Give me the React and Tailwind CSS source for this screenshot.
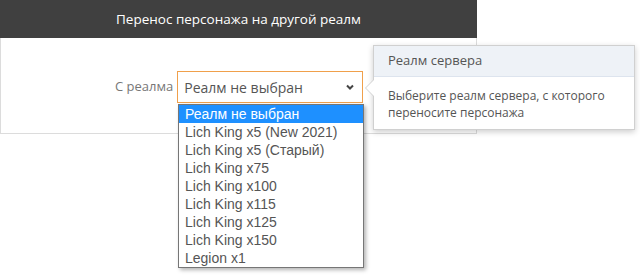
import React from "react";

const items = [
  "Реалм не выбран",
  "Lich King x5 (New 2021)",
  "Lich King x5 (Старый)",
  "Lich King x75",
  "Lich King x100",
  "Lich King x115",
  "Lich King x125",
  "Lich King x150",
  "Legion x1",
];

export default function App() {
  return (
    <div className="relative w-[640px] h-[280px] bg-white overflow-hidden" style={{ fontFamily: '"Open Sans", sans-serif' }}>
      <div className="w-[477px]">
        <div className="h-[38px] bg-[#404040] flex items-center justify-center text-white text-[13.5px]">
          Перенос персонажа на другой реалм
        </div>
        <div className="h-[96px] border-l border-r border-b border-[#dcdcdc] pt-[33px] pl-[114px] flex items-start">
          <div className="h-[32px] flex items-center text-[#777] text-[13px] mr-[4px]">С реалма</div>
          <div className="w-[186px] h-[32px] border border-[#f0a04b] flex items-center justify-between pl-[6px] pr-[7px] text-[#555] text-[14px]">
            <span>Реалм не выбран</span>
            <svg width="10" height="8" viewBox="0 0 10 8">
              <path d="M2 2.5 L5 5.5 L8 2.5" fill="none" stroke="#444" strokeWidth="2" />
            </svg>
          </div>
        </div>
      </div>

      <div
        className="absolute left-[178px] top-[104px] w-[186px] bg-white border border-[#767676] shadow-[2px_2px_4px_rgba(0,0,0,0.3)] text-[14px] text-[#555]"
        style={{ fontFamily: '"Liberation Sans", Arial, sans-serif' }}
      >
        {items.map((it, i) => (
          <div
            key={it}
            className={
              "h-[18px] leading-[18px] pl-[6px] " + (i === 0 ? "bg-[#1e90ff] text-white" : "")
            }
          >
            {it}
          </div>
        ))}
      </div>

      <div className="absolute left-[373px] top-[45px] w-[262px] h-[85px] bg-white border border-[#d0d0d0] shadow-[0_2px_6px_rgba(0,0,0,0.2)]">
        <div className="h-[31px] bg-[#eef2f7] border-b border-[#dde4ee] flex items-center pl-[14px] text-[13px] text-[#555]">
          Реалм сервера
        </div>
        <div className="pl-[14px] pt-[10px] text-[12px] leading-[17px] text-[#555]">
          Выберите реалм сервера, с которого
          <br />
          переносите персонажа
        </div>
        <div className="absolute left-[-9px] top-[33px] w-0 h-0 border-y-[9px] border-y-transparent border-r-[9px] border-r-[#d0d0d0]" />
        <div className="absolute left-[-8px] top-[34px] w-0 h-0 border-y-[8px] border-y-transparent border-r-[8px] border-r-white" />
      </div>
    </div>
  );
}
